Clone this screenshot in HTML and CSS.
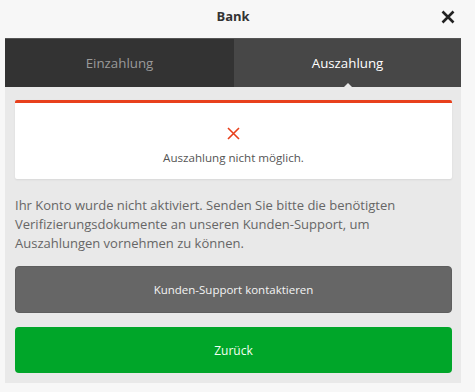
FILE: index.html
```html
<!DOCTYPE html>
<html lang="de">
<head>
<meta charset="utf-8">
<link rel="stylesheet" href="styles.css">
</head>
<body>
<div class="modal">
  <header class="head">
    <h1 class="title">Bank</h1>
    <button class="close" aria-label="Schließen">
      <svg width="14" height="14" viewBox="0 0 14 14"><path d="M1.5 1.5 L12.5 12.5 M12.5 1.5 L1.5 12.5" stroke="#222" stroke-width="2.6" fill="none"/></svg>
    </button>
  </header>
  <nav class="tabs">
    <div class="tab">Einzahlung</div>
    <div class="tab active">Auszahlung</div>
  </nav>
  <section class="panel">
    <div class="card">
      <svg class="err" width="13" height="13" viewBox="0 0 13 13"><path d="M1 1 L12 12 M12 1 L1 12" stroke="#e8401c" stroke-width="1.6" fill="none"/></svg>
      <p class="card-text">Auszahlung nicht möglich.</p>
    </div>
    <p class="info">Ihr Konto wurde nicht aktiviert. Senden Sie bitte die benötigten Verifizierungsdokumente an unseren Kunden-Support, um Auszahlungen vornehmen zu können.</p>
    <button class="btn btn-grey">Kunden-Support kontaktieren</button>
    <button class="btn btn-green">Zurück</button>
  </section>
</div>
</body>
</html>
```
FILE: styles.css
```css
* { box-sizing: border-box; }
html, body { margin: 0; padding: 0; }
body {
  background: #f7f7f7;
  font-family: "Open Sans", "Noto Sans", sans-serif;
  color: #666;
}
.modal {
  width: 456px;
  margin-left: 5px;
}
.head {
  height: 38px;
  display: flex;
  align-items: center;
  justify-content: center;
  position: relative;
}
.title {
  margin: 0;
  font-size: 13px;
  font-weight: 700;
  color: #333;
  margin-top: -6px;
}
.close {
  position: absolute;
  right: 6px;
  top: 10px;
  background: none;
  border: 0;
  padding: 0;
  width: 14px;
  height: 14px;
  display: block;
}
.close svg { display: block; }
.tabs {
  display: flex;
  height: 49px;
  border-top: 1px solid #555;
}
.tab {
  flex: 0 0 229px;
  display: flex;
  align-items: center;
  justify-content: center;
  background: #333;
  color: #9a9a9a;
  font-size: 13.3px;
  position: relative;
}
.tab.active {
  flex: 1;
  background: #474747;
  color: #fff;
}
.tab.active::after {
  content: "";
  position: absolute;
  left: 50%;
  bottom: 0;
  margin-left: -4px;
  border-left: 4px solid transparent;
  border-right: 4px solid transparent;
  border-bottom: 4px solid #e9e9e9;
}
.panel {
  background: #e9e9e9;
  padding: 13px 9px 10px 10px;
  display: flex;
  flex-direction: column;
}
.card {
  background: #fff;
  border-top: 3px solid #e8401c;
  border-radius: 2px;
  height: 79px;
  display: flex;
  flex-direction: column;
  align-items: center;
  padding-top: 24px;
  box-shadow: 0 1px 2px rgba(0,0,0,0.08);
}
.err { display: block; }
.card-text {
  margin: 10px 0 0;
  font-size: 11.6px;
  color: #555;
}
.info {
  margin: 17px 0 13px;
  font-size: 13px;
  line-height: 19px;
  color: #666;
}
.btn {
  display: block;
  width: 100%;
  border: 0;
  border-radius: 4px;
  font-family: inherit;
  font-size: 11.5px;
  color: #fff;
}
.btn-grey {
  height: 47px;
  background: #666;
  border: 1px solid #5e5e5e;
  color: #f4f4f4;
}
.btn-green {
  height: 46px;
  margin-top: 14px;
  background: #00a629;
  color: #f2fff2;
  font-size: 12px;
}
```
